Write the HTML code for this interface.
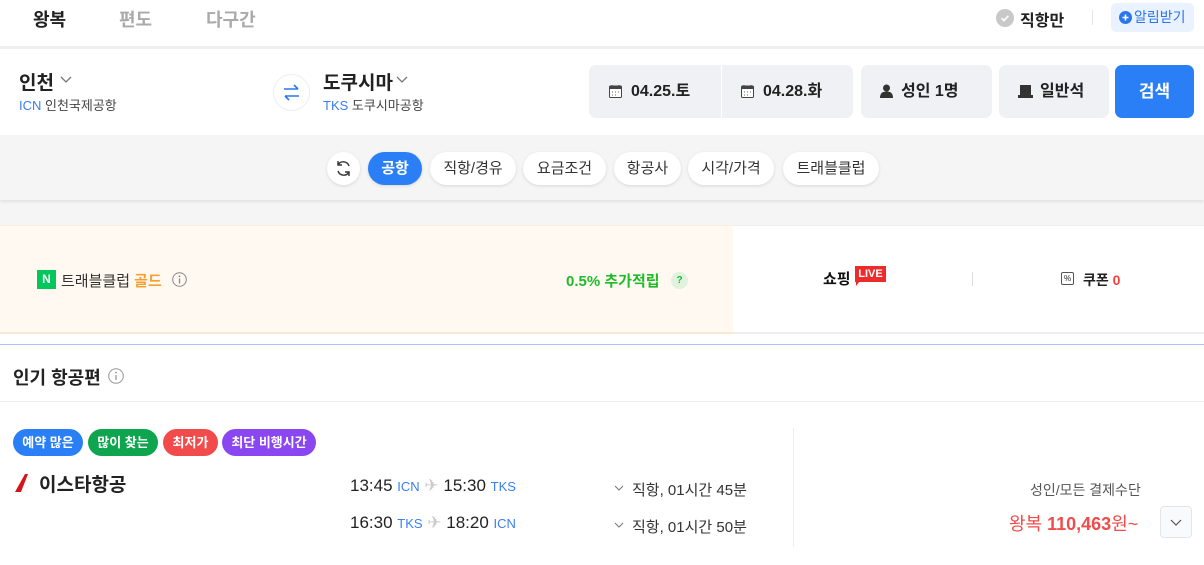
<!DOCTYPE html>
<html><head><meta charset="utf-8"><style>
*{margin:0;padding:0;box-sizing:border-box}
body{width:1204px;height:565px;overflow:hidden;background:#fff;font-family:"Liberation Sans","Noto Sans CJK KR",sans-serif;color:#222;position:relative}
.a{position:absolute;white-space:nowrap}
.chip{position:absolute;top:152px;height:33px;border-radius:17px;background:#fff;box-shadow:0 1px 3px rgba(0,0,0,.12);font-size:15px;color:#333;line-height:33px;text-align:center}
.box{position:absolute;top:65px;height:53px;background:#f0f1f4;border-radius:7px}
.tag{position:absolute;top:429px;height:27px;border-radius:14px;color:#fff;font-size:13px;font-weight:bold;line-height:27px;text-align:center}
.c{font-size:13px;color:#3a7ff0}
svg{position:absolute;overflow:visible}
</style></head><body>
<div class="a" style="left:33px;top:6px;font-size:18px;font-weight:bold;color:#222">왕복</div>
<div class="a" style="left:119px;top:6px;font-size:18px;font-weight:bold;color:#aaa">편도</div>
<div class="a" style="left:206px;top:6px;font-size:18px;font-weight:bold;color:#aaa">다구간</div>
<svg style="left:996px;top:9px" width="18" height="18"><circle cx="9" cy="9" r="9" fill="#c8c8c8"/><path d="M5.5 9.2l2.4 2.4 4.5-4.8" stroke="#fff" stroke-width="1.6" fill="none"/></svg>
<div class="a" style="left:1020px;top:7px;font-size:16px;font-weight:bold">직항만</div>
<div class="a" style="left:1092px;top:10px;width:1px;height:15px;background:#e5e5e5"></div>
<div class="a" style="left:1111px;top:3px;width:83px;height:29px;border-radius:5px;background:#e9f2fe"></div>
<svg style="left:1119px;top:11px" width="13" height="13"><circle cx="6.5" cy="6.5" r="6.5" fill="#2a76ee"/><path d="M6.5 3.5v6M3.5 6.5h6" stroke="#fff" stroke-width="1.6"/></svg>
<div class="a" style="left:1134px;top:3px;color:#2a76ee;font-size:14px;line-height:29px">알림받기</div>
<div class="a" style="left:0;top:46px;width:1204px;height:3px;background:#eeeeee"></div>

<div class="a" style="left:19px;top:68px;font-size:19px;font-weight:bold">인천</div>
<svg style="left:60px;top:76px" width="12" height="8"><path d="M1 1l5 5 5-5" stroke="#777" stroke-width="1.3" fill="none"/></svg>
<div class="a" style="left:19px;top:95px;font-size:13px;color:#444"><span style="color:#3a7ff0">ICN</span> 인천국제공항</div>
<div class="a" style="left:273px;top:74px;width:37px;height:37px;border-radius:50%;border:1px solid #eee"></div>
<svg style="left:283px;top:84px" width="17" height="17"><path d="M1 5h14M11 1l4 4M16 12H2M6 16l-4-4" stroke="#2a76ee" stroke-width="1.6" fill="none"/></svg>
<div class="a" style="left:323px;top:68px;font-size:19px;font-weight:bold">도쿠시마</div>
<svg style="left:396px;top:76px" width="12" height="8"><path d="M1 1l5 5 5-5" stroke="#777" stroke-width="1.3" fill="none"/></svg>
<div class="a" style="left:323px;top:95px;font-size:13px;color:#444"><span style="color:#3a7ff0">TKS</span> 도쿠시마공항</div>

<div class="box" style="left:589px;width:264px"></div>
<div class="a" style="left:721px;top:65px;width:1px;height:53px;background:#fff"></div>
<svg style="left:609px;top:85px" width="13" height="13"><rect x="0.5" y="1" width="12" height="11.5" rx="1" fill="#fff" stroke="#444"/><rect x="0.5" y="1" width="12" height="3" fill="#444"/><path d="M3 0v2M10 0v2" stroke="#444"/><path d="M3 7h1M6 7h1M9 7h1M3 10h1M6 10h1" stroke="#666"/></svg>
<div class="a" style="left:631px;top:65px;font-size:16px;font-weight:bold;line-height:53px">04.25.토</div>
<svg style="left:741px;top:85px" width="13" height="13"><rect x="0.5" y="1" width="12" height="11.5" rx="1" fill="#fff" stroke="#444"/><rect x="0.5" y="1" width="12" height="3" fill="#444"/><path d="M3 0v2M10 0v2" stroke="#444"/><path d="M3 7h1M6 7h1M9 7h1M3 10h1M6 10h1" stroke="#666"/></svg>
<div class="a" style="left:763px;top:65px;font-size:16px;font-weight:bold;line-height:53px">04.28.화</div>
<div class="box" style="left:861px;width:131px"></div>
<svg style="left:880px;top:84px" width="13" height="14"><circle cx="6.5" cy="4" r="3.5" fill="#333"/><path d="M0 14c0-5 2.5-6.5 6.5-6.5S13 9 13 14z" fill="#333"/></svg>
<div class="a" style="left:901px;top:65px;font-size:16px;font-weight:bold;line-height:53px">성인 1명</div>
<div class="box" style="left:999px;width:110px"></div>
<svg style="left:1018px;top:85px" width="15" height="13"><path d="M2 0h11v10H2z" fill="#333"/><rect x="0" y="10" width="15" height="3" fill="#333"/></svg>
<div class="a" style="left:1040px;top:65px;font-size:16px;font-weight:bold;line-height:53px">일반석</div>
<div class="a" style="left:1115px;top:65px;width:79px;height:53px;border-radius:7px;background:#2b7ff6;color:#fff;font-size:17px;font-weight:bold;text-align:center;line-height:53px">검색</div>

<div class="a" style="left:0;top:135px;width:1204px;height:90px;background:#f5f5f5"></div>
<div class="a" style="left:0;top:135px;width:1204px;height:65px;background:#f5f5f5;box-shadow:0 2px 3px rgba(0,0,0,.08)"></div>
<div class="chip" style="left:327px;width:33px"></div>
<svg style="left:335px;top:160px" width="17" height="17"><path d="M14 6A6 6 0 0 0 3 5M3 1v4h4M3 11a6 6 0 0 0 11 1M14 16v-4h-4" stroke="#333" stroke-width="1.4" fill="none"/></svg>
<div class="chip" style="left:368px;width:54px;background:#2b7ff6;color:#fff;font-weight:bold">공항</div>
<div class="chip" style="left:430px;width:86px">직항/경유</div>
<div class="chip" style="left:523px;width:83px">요금조건</div>
<div class="chip" style="left:614px;width:67px">항공사</div>
<div class="chip" style="left:688px;width:86px">시각/가격</div>
<div class="chip" style="left:783px;width:96px">트래블클럽</div>

<div class="a" style="left:0;top:225px;width:733px;height:109px;background:#fff9f2;border-top:1px solid #fbeedd;border-bottom:2px solid #fde8d4"></div>
<div class="a" style="left:733px;top:225px;width:471px;height:109px;background:#fff;border-top:1px solid #eee;border-bottom:2px solid #eee"></div>
<div class="a" style="left:37px;top:270px;width:19px;height:19px;background:#03c75a;color:#fff;font-size:12px;font-weight:bold;text-align:center;line-height:19px">N</div>
<div class="a" style="left:61px;top:270px;font-size:15px;color:#333">트래블클럽 <span style="color:#f5a030;font-weight:bold">골드</span></div>
<svg style="left:172px;top:272px" width="15" height="15"><circle cx="7.5" cy="7.5" r="6.8" fill="none" stroke="#888"/><path d="M7.5 6.5v5" stroke="#888" stroke-width="1.3"/><circle cx="7.5" cy="4.3" r=".9" fill="#888"/></svg>
<div class="a" style="left:566px;top:270px;font-size:15px;font-weight:bold;color:#1fbb2a">0.5% 추가적립</div>
<div class="a" style="left:671px;top:272px;width:17px;height:17px;border-radius:50%;background:#dff3df;color:#1fbb2a;font-size:10px;font-weight:bold;line-height:17px;text-align:center">?</div>
<div class="a" style="left:823px;top:268px;font-size:15px;font-weight:bold;color:#111">쇼핑</div>
<div class="a" style="left:855px;top:266px;width:31px;height:16px;background:#ee2b2b;color:#fff;font-size:11px;font-weight:bold;line-height:16px;text-align:center">LIVE</div>
<div class="a" style="left:856px;top:281px;width:0;height:0;border-left:4px solid #ee2b2b;border-bottom:5px solid transparent"></div>
<div class="a" style="left:972px;top:272px;width:1px;height:14px;background:#ddd"></div>
<div class="a" style="left:1061px;top:272px;width:13px;height:13px;border:1px solid #555;border-radius:2px;font-size:8px;line-height:11px;text-align:center">%</div>
<div class="a" style="left:1083px;top:270px;font-size:14px;font-weight:bold">쿠폰 <span style="color:#f04040">0</span></div>
<div class="a" style="left:0;top:344px;width:1204px;height:1px;background:#a9c4f2"></div>

<div class="a" style="left:13px;top:364px;font-size:18px;font-weight:bold">인기 항공편</div>
<svg style="left:108px;top:368px" width="16" height="16"><circle cx="8" cy="8" r="7.3" fill="none" stroke="#999"/><path d="M8 7v5" stroke="#999" stroke-width="1.3"/><circle cx="8" cy="4.6" r=".9" fill="#999"/></svg>
<div class="a" style="left:0;top:401px;width:1204px;height:1px;background:#eee"></div>

<div class="tag" style="left:13px;width:70px;background:#2b7ff6">예약 많은</div>
<div class="tag" style="left:88px;width:70px;background:#0ea54e">많이 찾는</div>
<div class="tag" style="left:163px;width:55px;background:#f24b4b">최저가</div>
<div class="tag" style="left:222px;width:94px;background:#8a46f0">최단 비행시간</div>
<svg style="left:15px;top:473px" width="20" height="20"><path d="M0 19L10 1h3L6 19z" fill="#d4141c"/></svg>
<div class="a" style="left:39px;top:470px;font-size:19px;font-weight:bold">이스타항공</div>

<div class="a" style="left:350px;top:476px;font-size:17px">13:45 <span class="c">ICN</span> <span style="color:#ccc">✈</span> 15:30 <span class="c">TKS</span></div>
<div class="a" style="left:350px;top:513px;font-size:17px">16:30 <span class="c">TKS</span> <span style="color:#ccc">✈</span> 18:20 <span class="c">ICN</span></div>
<svg style="left:614px;top:485px" width="10" height="6"><path d="M1 1l4 4 4-4" stroke="#777" fill="none"/></svg>
<div class="a" style="left:632px;top:479px;font-size:15px;color:#333">직항, 01시간 45분</div>
<svg style="left:614px;top:522px" width="10" height="6"><path d="M1 1l4 4 4-4" stroke="#777" fill="none"/></svg>
<div class="a" style="left:632px;top:516px;font-size:15px;color:#333">직항, 01시간 50분</div>

<div class="a" style="left:793px;top:428px;width:1px;height:119px;background:#eee"></div>
<div class="a" style="left:1030px;top:480px;font-size:14px;color:#555">성인/모든 결제수단</div>
<div class="a" style="left:1009px;top:510px;font-size:18px;color:#f24b4b">왕복 <b>110,463</b>원~</div>
<div class="a" style="left:1160px;top:506px;width:32px;height:32px;border:1px solid #e5e5e5;border-radius:4px;background:#f9fafb"></div>
<svg style="left:1170px;top:519px" width="12" height="7"><path d="M1 1l5 5 5-5" stroke="#555" stroke-width="1.2" fill="none"/></svg>
</body></html>
